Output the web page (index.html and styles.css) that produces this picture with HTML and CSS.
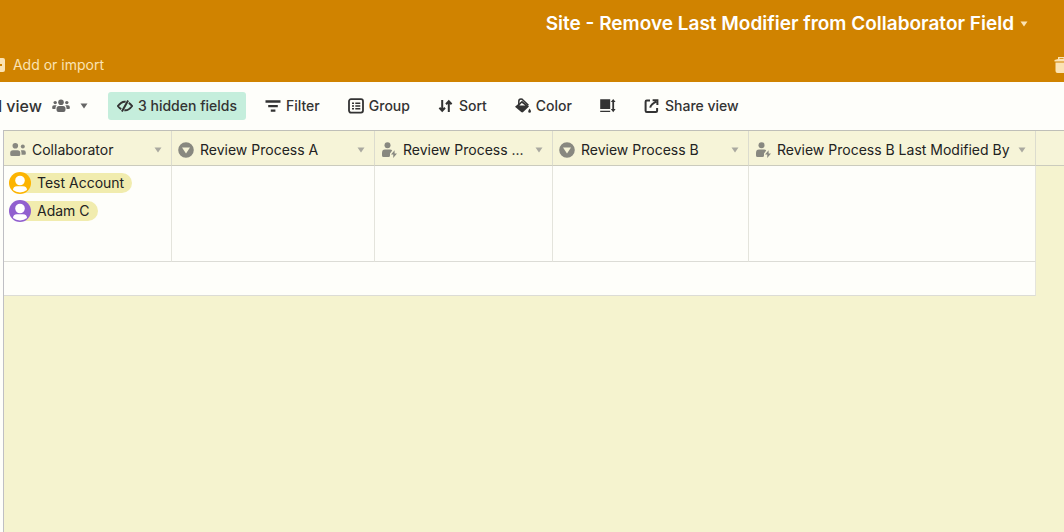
FILE: index.html
```html
<!DOCTYPE html>
<html lang="en">
<head>
    <meta charset="UTF-8">
    <meta name="viewport" content="width=device-width, initial-scale=1.0">
    <title>Site - Remove Last Modifier from Collaborator Field</title>
    <link rel="stylesheet" href="styles.css">
</head>
<body>
    <svg class="icon-defs" aria-hidden="true">
        <symbol id="icon-caret" viewBox="0 0 8 6"><path d="M0.5 0.5h7L4 5.5z"/></symbol>
        <symbol id="icon-person-bolt" viewBox="0 0 16 16">
            <circle cx="6.5" cy="3.2" r="3"/>
            <path d="M1 13.5V11Q1 7.6 4 7.6h5Q10.6 7.6 11.2 8.6L9 11.4V13.5Q9 15 7.5 15H2.5Q1 15 1 13.5z"/>
            <path d="M13.6 8.2L10 12.4h2.3L12.2 16l3.8-4.5h-2.4z"/>
        </symbol>
        <symbol id="icon-select" viewBox="0 0 16 16">
            <path fill-rule="evenodd" d="M8 0.2a7.8 7.8 0 1 0 0 15.6A7.8 7.8 0 0 0 8 0.2zM4 5.5h8L8 11.6z"/>
        </symbol>
        <symbol id="icon-avatar" viewBox="0 0 22 22">
            <circle cx="11" cy="11" r="11"/>
            <circle cx="11" cy="8.5" r="4.8" fill="#fff"/>
            <path d="M4 18q0-3.8 4-3.8h6q4 0 4 3.8-3 2.4-7 2.4T4 18z" fill="#fff"/>
        </symbol>
    </svg>

    <header class="top-bar">
        <div class="title-row">
            <button class="base-title">
                <span>Site - Remove Last Modifier from Collaborator Field</span>
                <svg class="caret"><use href="#icon-caret"/></svg>
            </button>
        </div>
        <div class="tabs-row">
            <button class="add-import">
                <svg class="add-icon" viewBox="0 0 14 14"><path fill-rule="evenodd" d="M2 0h10q2 0 2 2v10q0 2-2 2H2q-2 0-2-2V2q0-2 2-2zM6 3v3H3v2h3v3h2V8h3V6H8V3z"/></svg>
                Add or import
            </button>
            <button class="trash" aria-label="Trash">
                <svg viewBox="0 0 16 16"><path fill-rule="evenodd" d="M4 0h7v2h4v2.6H0.5V3L4 2zM5.5 1.2v0.9h4v-0.9zM1.5 5.5h12.5V14q0 2-2 2h-8.5q-2 0-2-2z"/></svg>
            </button>
        </div>
    </header>

    <nav class="toolbar">
        <button class="view-switcher">
            <span class="view-name">Grid view</span>
            <svg class="people" viewBox="0 0 18 14">
                <circle cx="9" cy="3.3" r="2.8"/>
                <circle cx="3.2" cy="3.6" r="1.7"/>
                <circle cx="14.8" cy="3.6" r="1.7"/>
                <path d="M4.5 11V9.5Q4.5 7 7 7h4q2.5 0 2.5 2.5V11q0 2-2 2h-5q-2 0-2-2zM0.2 9.2V8Q0.2 6.2 2 6.2h2.6Q3.4 7.5 3.4 10H1Q0.2 10 0.2 9.2zM17.8 9.2V8q0-1.8-1.8-1.8h-2.6q1.2 1.3 1.2 3.8H17q0.8 0 0.8-0.8z"/>
            </svg>
            <svg class="caret"><use href="#icon-caret"/></svg>
        </button>
        <button class="tool active">
            <svg class="line" viewBox="0 0 16 16"><path d="M8.6 3.8C5 3 2.6 5.8 0.9 8c0.9 1.2 1.8 2.2 3.3 3.1M11.8 4.9C13.3 5.8 14.2 6.8 15.1 8c-1.7 2.2-4.1 5-7.7 4.2M11.1 2.4L4.9 13.6"/></svg>
            3 hidden fields
        </button>
        <button class="tool">
            <svg viewBox="0 0 16 16"><path d="M0.5 2.2h15v2.6H0.5zM3.2 7h9.6v2.3H3.2zM5.8 11.5h4.6v2.3H5.8z"/></svg>
            Filter
        </button>
        <button class="tool">
            <svg viewBox="0 0 16 16"><rect x="1" y="1.2" width="14" height="13.4" rx="2" fill="none" stroke="currentColor" stroke-width="1.8"/><path d="M4 4.5h2v1.6H4zM7.3 4.5h5v1.6h-5zM4 7.3h2v1.5H4zM7.3 7.3h5v1.5h-5zM4 10h2v1.6H4zM7.3 10h5v1.6h-5z"/></svg>
            Group
        </button>
        <button class="tool">
            <svg class="line" viewBox="0 0 16 16"><path d="M4.2 2v10.5M1.4 9.8l2.8 3 2.8-3M10.8 14V3.5M8 6.2l2.8-3 2.8 3"/></svg>
            Sort
        </button>
        <button class="tool">
            <svg viewBox="0 0 16 16"><path d="M3.8 6.5V3.4Q3.8 1 6 1q1.2 0 2.2 1.2l5.2 5.2" fill="none" stroke="currentColor" stroke-width="1.5"/><path fill-rule="evenodd" d="M7 2.8l7 5.6-5.8 5.6q-1 0.9-2 0L0 8.7zM6.8 5L4.3 7.4h6zM14.6 10.4q1.4 2 1.4 3a1.4 1.4 0 0 1-2.8 0q0-1 1.4-3z"/></svg>
            Color
        </button>
        <button class="tool" aria-label="Row height">
            <svg viewBox="0 0 16 16"><path d="M0.2 1.2h10v9.8h-10zM0.2 12.8h10v1.3h-10z"/><path d="M13.2 1l2.4 3.1h-1.5v7h1.5l-2.4 3.1-2.4-3.1h1.5v-7h-1.5z"/></svg>
        </button>
        <button class="tool">
            <svg class="line" viewBox="0 0 16 16"><path d="M6 2.5H2.8Q1.6 2.5 1.6 3.7v9.1q0 1.2 1.2 1.2h9.1q1.2 0 1.2-1.2V10"/><path d="M6.2 9.6Q7 6 12.2 3.6M8.6 2.2h4.8v4.8"/></svg>
            Share view
        </button>
    </nav>

    <main class="grid">
        <table class="records">
            <colgroup>
                <col class="col-collaborator">
                <col class="col-review-a">
                <col class="col-modified-a">
                <col class="col-review-b">
                <col class="col-modified-b">
                <col>
            </colgroup>
            <thead>
                <tr>
                    <th>
                        <div class="field">
                            <svg class="field-icon" viewBox="0 0 16 16"><circle cx="5.3" cy="3.8" r="2.8"/><circle cx="12.8" cy="4.6" r="2"/><path d="M0.2 12.5V11Q0.2 8.2 3 8.2h4.5q2.8 0 2.8 2.8v1.5Q10.3 14 8.8 14H1.7Q0.2 14 0.2 12.5zM11.5 8.2h2.2q2.1 0 2.1 2.2v1.4q0 1-1 1h-3.3V11q0-1.6-0.7-2.6z"/></svg>
                            <span>Collaborator</span>
                            <svg class="caret"><use href="#icon-caret"/></svg>
                        </div>
                    </th>
                    <th>
                        <div class="field">
                            <svg class="field-icon"><use href="#icon-select"/></svg>
                            <span>Review Process A</span>
                            <svg class="caret"><use href="#icon-caret"/></svg>
                        </div>
                    </th>
                    <th>
                        <div class="field">
                            <svg class="field-icon"><use href="#icon-person-bolt"/></svg>
                            <span>Review Process ...</span>
                            <svg class="caret"><use href="#icon-caret"/></svg>
                        </div>
                    </th>
                    <th>
                        <div class="field">
                            <svg class="field-icon"><use href="#icon-select"/></svg>
                            <span>Review Process B</span>
                            <svg class="caret"><use href="#icon-caret"/></svg>
                        </div>
                    </th>
                    <th>
                        <div class="field">
                            <svg class="field-icon"><use href="#icon-person-bolt"/></svg>
                            <span>Review Process B Last Modified By</span>
                            <svg class="caret"><use href="#icon-caret"/></svg>
                        </div>
                    </th>
                    <th></th>
                </tr>
            </thead>
            <tbody>
                <tr class="record">
                    <td>
                        <ul class="people-list">
                            <li class="person"><svg class="avatar yellow"><use href="#icon-avatar"/></svg><span>Test Account</span></li>
                            <li class="person"><svg class="avatar purple"><use href="#icon-avatar"/></svg><span>Adam C</span></li>
                        </ul>
                    </td>
                    <td></td>
                    <td></td>
                    <td></td>
                    <td></td>
                    <td class="outside"></td>
                </tr>
                <tr class="add-row">
                    <td colspan="5"></td>
                    <td class="outside"></td>
                </tr>
            </tbody>
        </table>
    </main>
</body>
</html>
```
FILE: styles.css
```css
* {
    box-sizing: border-box;
}
body {
    font-family: Inter, "Liberation Sans", sans-serif;
    font-size: 14px;
    line-height: 20px;
    color: #222;
    margin: 0;
    min-height: 100vh;
    display: flex;
    flex-direction: column;
    overflow-x: hidden;
    background-color: #fefefa;
}
button {
    font: inherit;
    color: inherit;
    background: none;
    border: none;
    padding: 0;
    display: flex;
    align-items: center;
    white-space: nowrap;
    cursor: pointer;
}
svg {
    fill: currentColor;
    flex-shrink: 0;
}
.icon-defs {
    display: none;
}
.caret {
    width: 8px;
    height: 6px;
}

/* Top bar */
.top-bar {
    background-color: #d08300;
    color: #fff;
}
.title-row {
    display: flex;
    justify-content: flex-end;
    height: 48px;
    padding-right: 36px;
}
.base-title {
    gap: 6px;
    font-size: 19px;
    font-weight: 600;
}
.base-title .caret {
    color: #fbe3b4;
}
.tabs-row {
    display: flex;
    justify-content: space-between;
    height: 34px;
    color: #fbe3b4;
}
.add-import {
    width: 104px;
    justify-content: flex-end;
    overflow: hidden;
    gap: 8px;
}
.add-icon {
    width: 14px;
    height: 14px;
}
.trash {
    width: 10px;
    overflow: hidden;
}
.trash svg {
    width: 16px;
    height: 16px;
}

/* Toolbar */
.toolbar {
    display: flex;
    align-items: center;
    gap: 10px;
    height: 48px;
    font-weight: 500;
    color: #333;
}
.view-switcher {
    width: 98px;
    padding-right: 10px;
    justify-content: flex-end;
    overflow: hidden;
    gap: 10px;
    color: #666;
}
.view-name {
    font-size: 16px;
    color: #333;
}
.people {
    width: 18px;
    height: 14px;
}
.tool {
    height: 28px;
    padding: 0 9px;
    gap: 5px;
    border-radius: 3px;
}
.tool svg {
    width: 16px;
    height: 16px;
}
.tool .line {
    fill: none;
    stroke: currentColor;
    stroke-width: 2;
}
.tool.active {
    background-color: #c5eedc;
}

/* Grid */
.grid {
    flex: 1;
    margin-left: 3px;
    border-top: 1px solid #bfbfb8;
    border-left: 1px solid #bfbfc4;
    background-color: #f5f3cf;
}
.records {
    width: 100%;
    table-layout: fixed;
    border-collapse: separate;
    border-spacing: 0;
}
.col-collaborator {
    width: 168px;
}
.col-review-a {
    width: 203px;
}
.col-modified-a {
    width: 178px;
}
.col-review-b {
    width: 196px;
}
.col-modified-b {
    width: 287px;
}
th {
    height: 35px;
    padding: 3px 9px 0 6px;
    font-weight: 400;
    text-align: left;
    border-right: 1px solid #dcdcce;
    border-bottom: 1px solid #cbcbbd;
    background-color: #f6f4d8;
}
th:last-child {
    border-right: none;
}
.field {
    display: flex;
    align-items: center;
    gap: 6px;
    color: #888880;
}
.field span {
    flex: 1;
    color: #222;
    white-space: nowrap;
}
.field .caret {
    color: #aaa9a0;
}
.field-icon {
    width: 16px;
    height: 16px;
}
td {
    padding: 0;
    vertical-align: top;
    border-right: 1px solid #e4e4dc;
    border-bottom: 1px solid #dcdcd6;
    background-color: #fefefa;
}
.outside {
    border: none;
    background: none;
}
.record td {
    height: 96px;
}
.add-row td {
    height: 34px;
}
.people-list {
    list-style: none;
    margin: 0;
    padding: 6px 5px;
    display: flex;
    flex-direction: column;
    align-items: flex-start;
    gap: 6px;
}
.person {
    display: flex;
    align-items: center;
    height: 22px;
}
.person span {
    margin-left: -11px;
    padding: 0 8px 0 17px;
    border-radius: 0 10px 10px 0;
    background-color: #f1ecae;
}
.avatar {
    position: relative;
    z-index: 1;
    width: 22px;
    height: 22px;
}
.yellow {
    color: #fcb400;
}
.purple {
    color: #9160cf;
}
```
